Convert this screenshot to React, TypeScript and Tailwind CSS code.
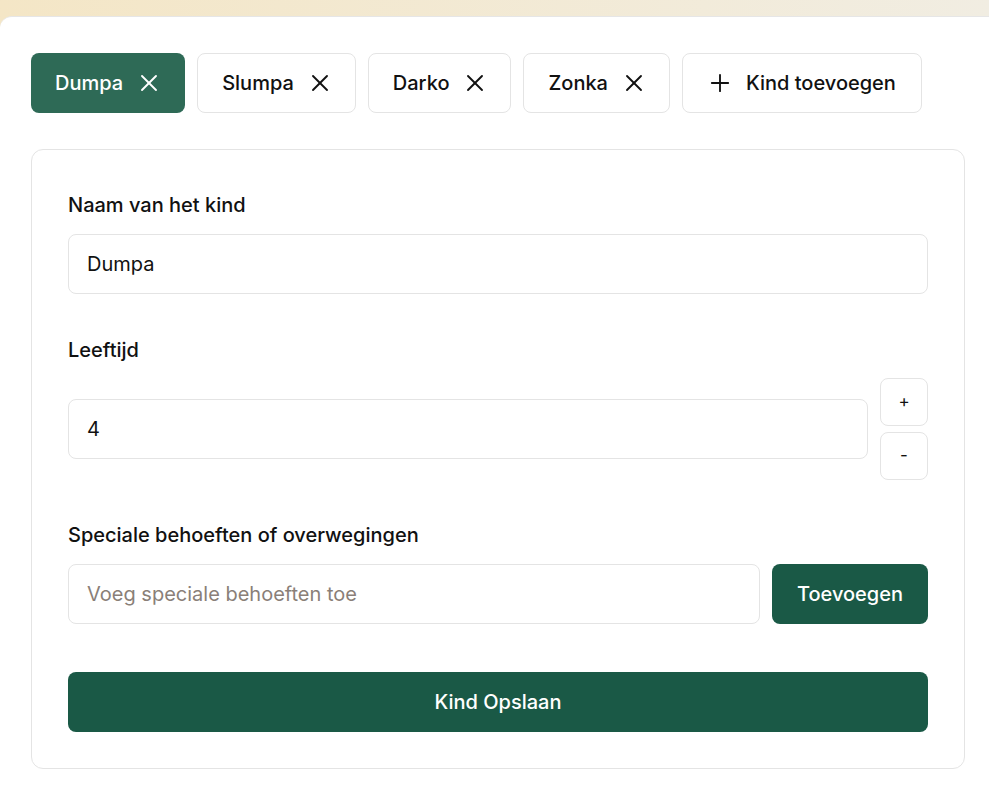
import { useState } from 'react';
import { X, Plus } from 'lucide-react';

const font = { fontFamily: 'Inter, "Noto Sans", sans-serif' };

const App = () => {
  const [kids] = useState(['Dumpa', 'Slumpa', 'Darko', 'Zonka']);
  const [active] = useState(0);
  const [age, setAge] = useState(4);

  return (
    <div
      style={font}
      className="min-h-[786px] w-[989px] bg-gradient-to-r from-[#f4e6c6] to-[#f1ede2] pt-4 text-[#111]"
    >
      <div className="min-h-[770px] rounded-tl-xl border-t border-[#e6e6e6] bg-white pt-[36px] pl-[31px] pr-[24px]">
        {/* Tabs */}
        <div className="flex gap-[12px]">
          {kids.map((kid, i) => (
            <button
              key={kid}
              className={
                i === active
                  ? 'flex h-[60px] items-center gap-[12px] rounded-lg bg-[#2e6a56] pl-6 pr-[22px] text-[20px] font-medium text-white'
                  : 'flex h-[60px] items-center gap-[12px] rounded-lg border border-[#e4e4e4] bg-white pl-6 pr-[21px] text-[20px] font-medium text-[#111]'
              }
            >
              {kid}
              <X size={28} strokeWidth={1.6} />
            </button>
          ))}
          <button className="flex h-[60px] items-center gap-[12px] rounded-lg border border-[#e4e4e4] bg-white pl-[23px] pr-[25px] text-[20px] font-medium text-[#111]">
            <Plus size={28} strokeWidth={1.6} />
            Kind toevoegen
          </button>
        </div>

        {/* Form card */}
        <div className="mt-[36px] rounded-xl border border-[#e4e4e4] bg-white px-[36px] pt-[41px] pb-[36px]">
          <label className="block text-[20px] leading-7 font-medium">Naam van het kind</label>
          <div className="mt-[15px] flex h-[60px] items-center rounded-lg border border-[#e4e4e4] px-[18px] text-[20px]">
            Dumpa
          </div>

          <label className="mt-[42px] block text-[20px] leading-7 font-medium">Leeftijd</label>
          <div className="mt-[14px] flex items-center gap-3">
            <div className="flex h-[60px] flex-1 items-center rounded-lg border border-[#e4e4e4] px-[18px] text-[20px]">
              {age}
            </div>
            <div className="flex flex-col gap-[6px]">
              <button
                onClick={() => setAge(age + 1)}
                className="flex h-[48px] w-[48px] items-center justify-center rounded-lg border border-[#e4e4e4] text-[17px] text-[#111]"
              >
                +
              </button>
              <button
                onClick={() => setAge(Math.max(0, age - 1))}
                className="flex h-[48px] w-[48px] items-center justify-center rounded-lg border border-[#e4e4e4] text-[17px] text-[#111]"
              >
                -
              </button>
            </div>
          </div>

          <label className="mt-[41px] block text-[20px] leading-7 font-medium">
            Speciale behoeften of overwegingen
          </label>
          <div className="mt-[15px] flex gap-3">
            <div className="flex h-[60px] flex-1 items-center rounded-lg border border-[#e4e4e4] px-[18px] text-[20px] text-[#8a7f78]">
              Voeg speciale behoeften toe
            </div>
            <button className="h-[60px] w-[156px] rounded-lg bg-[#1a5946] text-[20px] font-medium text-white">
              Toevoegen
            </button>
          </div>

          <button className="mt-[48px] h-[60px] w-full rounded-lg bg-[#1a5946] text-[20px] font-medium text-white">
            Kind Opslaan
          </button>
        </div>
      </div>
    </div>
  );
};

export default App;
